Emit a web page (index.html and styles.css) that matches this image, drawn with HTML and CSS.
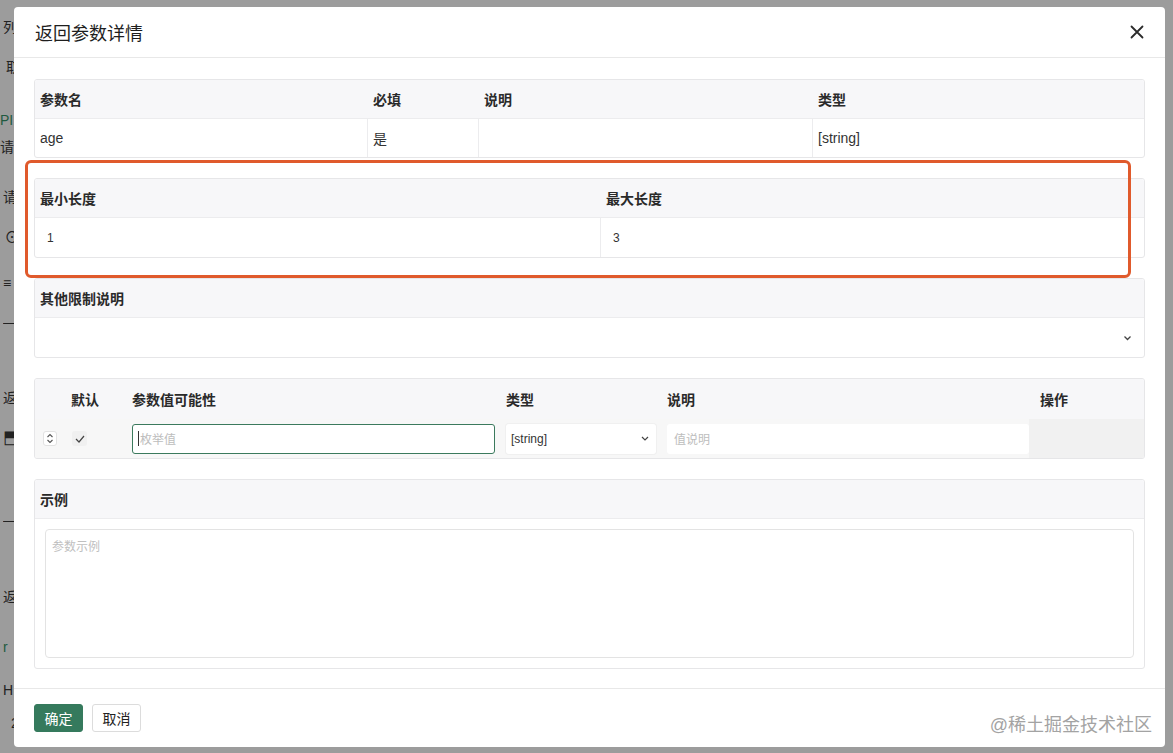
FILE: index.html
```html
<!DOCTYPE html>
<html lang="zh-CN">
    <head>
        <meta charset="UTF-8" />
        <meta name="viewport" content="width=device-width, initial-scale=1.0" />
        <title>返回参数详情</title>
        <link rel="stylesheet" href="styles.css">
    </head>
    <body>
        <!-- 뒤쪽 페이지 (가려진 부분) -->
        <ul class="side">
            <li>列</li>
            <li>取</li>
            <li class="on">PI</li>
            <li>请</li>
            <li>请</li>
            <li class="ico">&#9737;</li>
            <li>&#8801;</li>
            <li>&#8212;</li>
            <li>返</li>
            <li class="ico">&#11026;</li>
            <li>&#8212;</li>
            <li>返</li>
            <li class="on">r</li>
            <li>H</li>
            <li>2</li>
        </ul>

        <!-- 모달 -->
        <div class="modal">
            <div class="modal-hd">
                <h3 class="modal-title">返回参数详情</h3>
                <a href="#" class="close">
                    <svg width="14" height="14" viewBox="0 0 14 14"><path d="M1.5 1.5L12.5 12.5M12.5 1.5L1.5 12.5" stroke="#2b2b2b" stroke-width="1.8" stroke-linecap="round"/></svg>
                </a>
            </div>

            <div class="modal-bd">
                <!-- 기본정보 -->
                <div class="tbl t-base">
                    <div class="tr th">
                        <div>参数名</div>
                        <div>必填</div>
                        <div>说明</div>
                        <div>类型</div>
                    </div>
                    <div class="tr td">
                        <div>age</div>
                        <div>是</div>
                        <div></div>
                        <div>[string]</div>
                    </div>
                </div>

                <!-- 길이제한 -->
                <div class="tbl t-len">
                    <div class="tr th">
                        <div>最小长度</div>
                        <div>最大长度</div>
                    </div>
                    <div class="tr td">
                        <div>1</div>
                        <div>3</div>
                    </div>
                </div>

                <!-- 기타제한 -->
                <div class="tbl t-etc">
                    <div class="tr th">
                        <div>其他限制说明</div>
                    </div>
                    <div class="tr td">
                        <div class="sel-empty">
                            <svg width="9" height="6" viewBox="0 0 9 6"><path d="M1.5 1.5l3 3 3-3" fill="none" stroke="#444" stroke-width="1.3"/></svg>
                        </div>
                    </div>
                </div>

                <!-- 열거값 -->
                <div class="tbl t-enum">
                    <div class="tr th">
                        <div></div>
                        <div class="c-def">默认</div>
                        <div>参数值可能性</div>
                        <div>类型</div>
                        <div>说明</div>
                        <div class="c-op">操作</div>
                    </div>
                    <div class="tr td">
                        <div class="c-sort">
                            <span class="sort">
                                <svg width="8" height="11" viewBox="0 0 8 11"><path d="M1.5 4l2.5-2.5 2.5 2.5M1.5 7l2.5 2.5 2.5-2.5" fill="none" stroke="#555" stroke-width="1.1"/></svg>
                            </span>
                        </div>
                        <div class="c-def">
                            <span class="chk">
                                <svg width="10" height="8" viewBox="0 0 10 8"><path d="M1 4l3 3 5-6" fill="none" stroke="#444" stroke-width="1.2"/></svg>
                            </span>
                        </div>
                        <div><div class="ipt focus"><i class="caret"></i>枚举值</div></div>
                        <div>
                            <div class="ipt sel">
                                <span>[string]</span>
                                <svg width="8" height="5" viewBox="0 0 8 5"><path d="M1 1l3 3 3-3" fill="none" stroke="#444" stroke-width="1.2"/></svg>
                            </div>
                        </div>
                        <div class="c-desc"><div class="ipt">值说明</div></div>
                        <div class="c-op"></div>
                    </div>
                </div>

                <!-- 예시 -->
                <div class="tbl t-ex">
                    <div class="tr th">
                        <div>示例</div>
                    </div>
                    <div class="ex-bd">
                        <div class="textarea">参数示例</div>
                    </div>
                </div>
            </div>

            <div class="modal-ft">
                <button class="btn ok">确定</button>
                <button class="btn">取消</button>
            </div>
        </div>

        <!-- 빨간 표시박스 -->
        <div class="mark"></div>

        <!-- 워터마크 -->
        <div class="wm">@稀土掘金技术社区</div>
    </body>
</html>
```

FILE: styles.css
```css
* {
    box-sizing: border-box;
}

body {
    position: relative;
    margin: 0;
    width: 1173px;
    height: 753px;
    overflow: hidden;
    background-color: #9c9c9c;
    font-family: "Liberation Sans", "Noto Sans CJK SC", sans-serif;
    color: #333;
}

/* 뒤쪽 사이드 글자들 (모달 밖으로 보이는 부분만) */
.side {
    width: 14px;
    margin: 0;
    padding: 0 0 0 3px;
    overflow: hidden;
    list-style: none;
    font-size: 14px;
    color: #222;
}
.side li {
    height: 20px;
    line-height: 20px;
    white-space: nowrap;
    overflow: hidden;
}
.side li.on {
    color: #1f5a40;
}
.side li:nth-child(1) { margin-top: 17px; }
.side li:nth-child(2) { margin-top: 20px; padding-left: 3px; }
.side li:nth-child(3) { margin-top: 33px; margin-left: -3px; }
.side li:nth-child(4) { margin-top: 7px; margin-left: -3px; }
.side li:nth-child(5) { margin-top: 30px; }
.side li:nth-child(6) { margin-top: 21px; font-size: 18px; }
.side li:nth-child(7) { margin-top: 25px; }
.side li:nth-child(8) { margin-top: 19px; }
.side li:nth-child(9) { margin-top: 56px; }
.side li:nth-child(10) { margin-top: 19px; font-size: 18px; }
.side li:nth-child(11) { margin-top: 63px; }
.side li:nth-child(12) { margin-top: 57px; }
.side li:nth-child(13) { margin-top: 30px; }
.side li:nth-child(14) { margin-top: 23px; }
.side li:nth-child(15) { margin-top: 13px; padding-left: 8px; }

/* 모달박스 */
.modal {
    position: absolute;
    top: 7px;
    left: 14px;
    width: 1151px;
    height: 740px;
    display: flex;
    flex-direction: column;
    background-color: #fff;
    border-radius: 4px;
}

.modal-hd {
    flex-shrink: 0;
    display: flex;
    align-items: center;
    justify-content: space-between;
    height: 51px;
    padding: 0 21px;
    border-bottom: 1px solid #e8e8e8;
}
.modal-title {
    margin: 0;
    font-size: 18px;
    font-weight: normal;
    color: #1e1e1e;
}
.close {
    display: flex;
}

.modal-bd {
    flex: 1;
    padding: 21px 20px 0;
}

/* 공통 테이블 */
.tbl {
    margin-bottom: 20px;
    border: 1px solid #e6e6e8;
    border-radius: 3px;
    overflow: hidden;
}
.tr {
    display: grid;
}
.th {
    height: 39px;
    align-items: center;
    background-color: #f7f7f9;
    border-bottom: 1px solid #ececee;
    font-size: 14px;
    font-weight: bold;
    color: #2a2a2a;
}
.th > div {
    padding: 0 5px;
}
.td {
    height: 39px;
    font-size: 14px;
    color: #333;
}
.td > div {
    display: flex;
    align-items: center;
    padding: 0 5px;
    border-right: 1px solid #ececee;
}
.td > div:last-child {
    border-right: 0;
}

.t-base .tr {
    grid-template-columns: 333px 111px 334px 1fr;
}
.t-base .td {
    height: 38px;
}

.t-len .tr {
    grid-template-columns: 566px 1fr;
}
.t-len .td > div {
    padding: 0 12px;
    font-size: 12px;
}

.t-etc .tr {
    grid-template-columns: 1fr;
}
.sel-empty {
    justify-content: flex-end;
    padding-right: 12px !important;
}

/* 열거값 테이블 */
.t-enum {
    background-color: #f7f7f8;
}
.t-enum .tr {
    grid-template-columns: 30px 62px 374px 161px 367px 1fr;
}
.t-enum .th {
    height: 40px;
    border-bottom: 0;
}
.t-enum .th .c-op {
    padding-left: 11px;
}
.t-enum .td {
    height: 39px;
    background-color: #f7f7f7;
}
.t-enum .td > div {
    border-right: 0;
    padding: 0 6px 0 5px;
}
.t-enum .c-def {
    padding-left: 6px;
}
.t-enum .td .c-sort {
    justify-content: center;
    padding: 0;
}
.t-enum .td .c-def {
    padding-left: 7px;
}
.t-enum .td .c-desc {
    padding-right: 0;
}
.t-enum .td .c-op {
    background-color: #f1f1f1;
}

.sort {
    display: flex;
    align-items: center;
    justify-content: center;
    width: 14px;
    height: 15px;
    background-color: #fff;
    border: 1px solid #e2e2e2;
    border-radius: 3px;
}
.chk {
    display: flex;
    align-items: center;
    justify-content: center;
    width: 15px;
    height: 15px;
    background-color: #f0f0f0;
    border-radius: 3px;
}

.ipt {
    display: flex;
    align-items: center;
    width: 100%;
    height: 30px;
    padding: 0 7px;
    background-color: #fff;
    border-radius: 3px;
    font-size: 12px;
    font-weight: normal;
    color: #bdbdbd;
}
.ipt.focus {
    padding-left: 5px;
    border: 1px solid #3b7a5d;
}
.caret {
    width: 1px;
    height: 15px;
    margin-right: 1px;
    background-color: #333;
}
.ipt.sel {
    justify-content: space-between;
    padding: 0 7px 0 5px;
    color: #333;
    box-shadow: 0 0 0 1px #f0f0f0;
}

/* 예시 */
.t-ex {
    margin-bottom: 0;
}
.t-ex .tr {
    grid-template-columns: 1fr;
}
.ex-bd {
    padding: 10px;
}
.textarea {
    height: 129px;
    padding: 7px 6px;
    border: 1px solid #e3e3e3;
    border-radius: 4px;
    font-size: 12px;
    color: #c0c0c0;
}

/* 하단버튼 */
.modal-ft {
    flex-shrink: 0;
    display: flex;
    gap: 9px;
    padding: 15px 20px;
    border-top: 1px solid #e8e8e8;
}
.btn {
    width: 49px;
    height: 28px;
    padding: 0;
    background-color: #fff;
    border: 1px solid #dcdcdc;
    border-radius: 3px;
    font-family: inherit;
    font-size: 14px;
    color: #222;
}
.btn.ok {
    background-color: #357a5d;
    border-color: #357a5d;
    color: #fff;
}

/* 빨간 표시박스 (위에 덮임) */
.mark {
    position: absolute;
    top: 160px;
    left: 25px;
    width: 1106px;
    height: 118px;
    border: 3px solid #e05a2c;
    border-radius: 6px;
}

/* 워터마크 */
.wm {
    position: absolute;
    right: 21px;
    top: 710px;
    font-size: 18px;
    color: #a3a3a3;
    white-space: nowrap;
}
```
